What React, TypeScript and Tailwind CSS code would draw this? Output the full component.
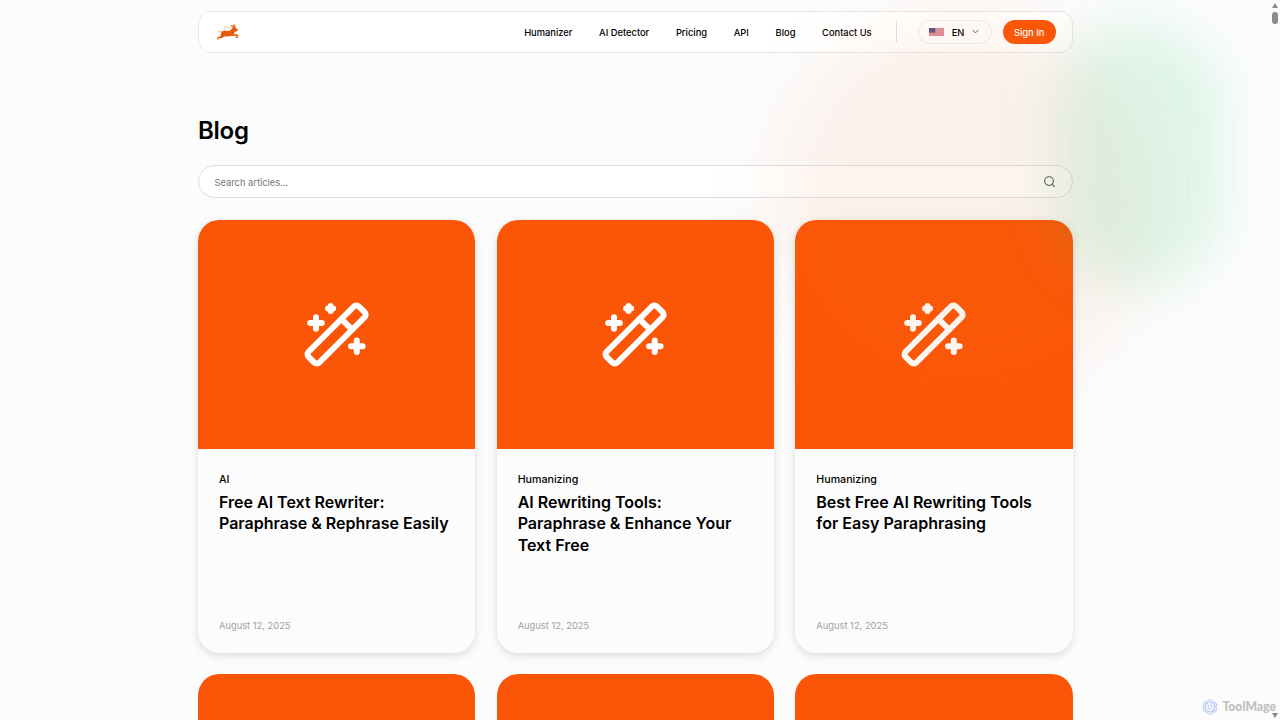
import React from 'react';
import { ChevronDown, Search } from 'lucide-react';

interface Post {
  category: string;
  title: string;
  date: string;
}

const navLinks = ['Humanizer', 'AI Detector', 'Pricing', 'API', 'Blog', 'Contact Us'];

const posts: Post[] = [
  { category: 'AI', title: 'Free AI Text Rewriter: Paraphrase & Rephrase Easily', date: 'August 12, 2025' },
  { category: 'Humanizing', title: 'AI Rewriting Tools: Paraphrase & Enhance Your Text Free', date: 'August 12, 2025' },
  { category: 'Humanizing', title: 'Best Free AI Rewriting Tools for Easy Paraphrasing', date: 'August 12, 2025' },
];

const RabbitLogo: React.FC = () => (
  <svg viewBox="0 0 66 46" className="h-[15.3px] w-[22px]" fill="#e8590c">
    <path d="M15 22c5-3 11-2 17-1 6 0 9-2 12-6 2-4 6-5 10-4 4 1 7 4 9 7-1 4-5 5-9 5-1 4-3 6-6 8l8 0c4 0 7 1 9 4l-2 3c-4-3-8-3-13-2l-11 0c-5 2-11 2-16 1-3 1-5 3-7 5l-10 1-3 4-4-1 4-7 8-2c0-6 1-11 4-15z" />
    <path d="M52 13c-4-2-10-5-11-10 5 0 9 3 12 8zM54 12c-4-4-6-8-4-12 4 2 6 6 6 12zM56 37l6 1 2 5-4-1-5-3z" />
    <path d="M22 20c-2-5 0-10 4-11 3-1 6 0 8 3 3-2 7-1 8 2M16 24l-11-1-3-3" fill="none" stroke="#e9a57c" strokeWidth="2.5" />
  </svg>
);

const UsFlag: React.FC = () => (
  <svg viewBox="0 0 15 9" className="h-[8.5px] w-[15px]" preserveAspectRatio="none">
    <rect width="15" height="9" fill="#e39aa5" />
    <path d="M0 .5h15M0 2.5h15M0 4.5h15M0 6.5h15M0 8.5h15" stroke="#d67f8d" strokeWidth=".8" />
    <rect width="6.3" height="4.8" fill="#555587" />
    <path d="M1 1.4h4.6M1 3.2h4.6" stroke="#77779f" strokeWidth=".5" strokeDasharray=".6 .6" />
  </svg>
);

const MagicWand: React.FC = () => (
  <svg viewBox="0 0 66 66" className="size-[66px]" fill="none" stroke="white" strokeWidth="6" strokeLinecap="round">
    <g transform="translate(32.6 33.5) rotate(-45)">
      <rect x="-35.6" y="-7.6" width="71.2" height="15.2" rx="3.6" />
      <path d="M14.4 -7.5v15" />
    </g>
    <path d="M12 16.2v11.6M6.2 22h11.6M26.6 5v5M24.1 7.5h5M52.8 39.4v11.6M47 45.2h11.6" />
  </svg>
);

const Navbar: React.FC = () => (
  <nav className="flex h-[42.6px] items-center justify-between rounded-[13px] border border-[#e8e8e8] bg-white pr-4 pl-[18px]">
    <RabbitLogo />
    <div className="flex items-center">
      <div className="flex gap-[26.67px] pt-[1.5px]">
        {navLinks.map((link) => (
          <a key={link} href="#" className="text-[9.33px] font-medium">{link}</a>
        ))}
      </div>
      <div className="ml-6 h-[21px] w-px bg-[#dcdfe3]" />
      <button className="ml-[21px] flex h-6 w-[74.5px] items-center rounded-full border border-[#ebeef5] pl-[10.5px] text-[9.33px] font-medium">
        <UsFlag />
        <span className="ml-[7.5px] pt-[1.5px]">EN</span>
        <ChevronDown className="ml-1.5 size-[11px] text-gray-600" strokeWidth={2} />
      </button>
      <button className="ml-[10.5px] h-6 w-[53px] rounded-full bg-[#fb5607] pt-[1.5px] text-[9.33px] font-medium text-white">Sign In</button>
    </div>
  </nav>
);

const CardCover: React.FC<{ children?: React.ReactNode }> = ({ children }) => (
  <div className="flex h-[229.3px] shrink-0 items-center justify-center bg-[#fb5607]">{children}</div>
);

const PostCard: React.FC<{ post: Post }> = ({ post }) => (
  <article className="flex h-[433.33px] flex-col overflow-hidden rounded-[21.33px] bg-[#fcfcfc] shadow-[0_2.7px_8px_rgba(0,0,0,0.13)]">
    <CardCover>
      <MagicWand />
    </CardCover>
    <div className="flex flex-1 flex-col px-[21px] pt-[22.8px] pb-[19px]">
      <p className="text-[10.67px] leading-4 font-medium">{post.category}</p>
      <h2 className="mt-[4.1px] max-w-[232px] text-[16px] leading-[21.33px] font-semibold">{post.title}</h2>
      <p className="mt-auto text-[9.33px] leading-4 text-[#a0a0a0]">{post.date}</p>
    </div>
  </article>
);

// Soft colour spots that tint everything below them
const Glow: React.FC = () => (
  <div className="pointer-events-none absolute inset-0 overflow-hidden">
    <div className="absolute top-[15px] left-[775px] h-[375px] w-[380px] rounded-full bg-[#f7742c]/8 blur-[34px]" />
    <div className="absolute top-[22px] left-[1056px] h-[265px] w-[168px] rounded-full bg-[#10c866]/12 blur-[26px]" />
  </div>
);

const App: React.FC = () => {
  return (
    <div className="relative h-[720px] w-full overflow-hidden bg-[#fcfcfc] font-['Inter',sans-serif] text-black">
      <div className="ml-[198px] w-[874.67px] pt-[10.7px]">
        <Navbar />
        <h1 className="mt-[62px] text-[24px] leading-8 font-semibold tracking-[-0.01em]">Blog</h1>
        <div className="mt-[17.5px] flex h-[33.7px] items-center justify-between rounded-full border border-[#dcdee2] bg-white px-[15.5px]">
          <input
            type="text"
            placeholder="Search articles..."
            className="w-full bg-transparent pt-0.5 text-[9.33px] outline-none placeholder:text-[#757575]"
          />
          <Search className="size-[13.3px] text-[#4b5563]" strokeWidth={2} />
        </div>
        <div className="mt-[21.2px] grid grid-cols-3 gap-[21.33px]">
          {posts.map((post, i) => (
            <PostCard key={i} post={post} />
          ))}
          {/* Next row, only its covers reach into the viewport */}
          {[0, 1, 2].map((i) => (
            <div key={i} className="overflow-hidden rounded-t-[21.33px]">
              <CardCover />
            </div>
          ))}
        </div>
      </div>

      <Glow />

      {/* Scrollbar */}
      <div className="absolute top-0 right-0 flex h-full w-2.5 flex-col items-center">
        <div className="mt-[3px] border-x-[3px] border-b-[5px] border-x-transparent border-b-[#8b8b8b]" />
        <div className="mt-1 h-3 w-1.5 rounded-full bg-[#8b8b8b]" />
        <div className="mt-auto mb-0.5 border-x-[3px] border-t-[5px] border-x-transparent border-t-[#858585]" />
      </div>

      {/* Watermark */}
      <div className="absolute right-[4px] bottom-[5px] flex items-center gap-[4px]">
        <svg viewBox="0 0 16 16" className="size-[16px]" fill="none" stroke="#b5cdf5" strokeWidth="1">
          {[0, 60, 120, 180, 240, 300].map((deg) => (
            <path key={deg} d="M4.8 6.2V4.3C4.8 2.2 6.2 .8 8 .8c1.3 0 2.3 .6 2.9 1.5M5 4.3l3-1.7 3.3 1.9" transform={`rotate(${deg} 8 8)`} />
          ))}
          <circle cx="8" cy="8" r="2" />
        </svg>
        <span className="font-['Lato',sans-serif] text-[12.2px] leading-[16px] font-black text-[#c0c0c0]">ToolMage</span>
      </div>
    </div>
  );
};

export default App;
